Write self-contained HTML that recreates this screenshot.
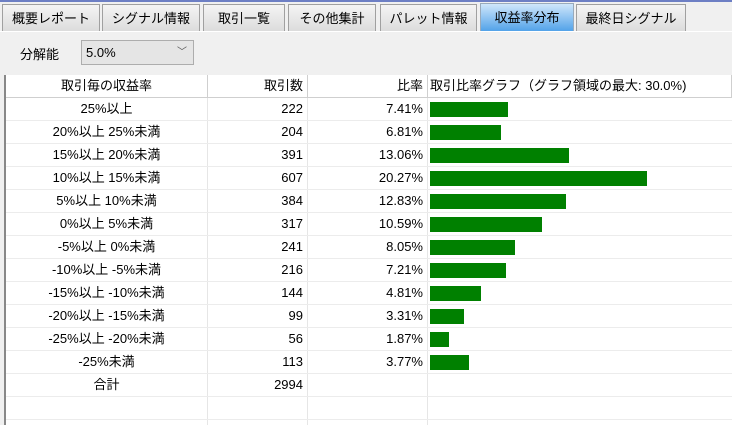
<!DOCTYPE html>
<html style="overflow:hidden;width:732px;height:425px"><head><meta charset="utf-8"><style>
*{margin:0;padding:0;box-sizing:border-box}
body{width:732px;height:425px;background:#f0f0f0;font-family:"Liberation Sans","Noto Sans CJK JP",sans-serif;font-size:13px;color:#000;position:relative;overflow:hidden}
.top{position:absolute;left:0;top:0;width:732px;height:2px;background:#6d7fc4}
.tab{position:absolute;top:4px;height:27px;border:1px solid #a0a0a0;border-bottom:none;background:linear-gradient(#f4f4f4,#dcdcdc);text-align:center;line-height:27px;font-size:13px}
.tab.act{background:linear-gradient(#cfe6fb,#4ea0e8);top:3px;height:29px;border-color:#9ab}
.line{position:absolute;left:0;top:31px;width:732px;height:1px;background:#fff}
.lbl{position:absolute;left:20px;top:44px}
.dd{position:absolute;left:81px;top:40px;width:113px;height:25px;border:1px solid #adadad;background:#e5e5e5;padding-left:4px;line-height:23px}
.dd span{position:absolute;right:6px;top:0;font-size:10px;color:#555}
.tbl{position:absolute;left:4px;top:75px;width:728px;height:350px;background:#fff;border-left:2px solid #888;overflow:hidden}
.row{position:absolute;left:0;height:23px;width:726px;border-bottom:1px solid #ececec}
.c{position:absolute;top:0;height:22px;line-height:22px;border-right:1px solid #e6e6e6}
.h .c{background:#fff;border-right:1px solid #cfcfcf}
.h{border-bottom:1px solid #cfcfcf}
.c1{left:0;width:202px;text-align:center}
.c2{left:202px;width:100px;text-align:right;padding-right:4px}
.c3{left:302px;width:120px;text-align:right;padding-right:4px}
.c4{left:422px;width:304px;border-right:none}
.bar{position:absolute;left:2px;top:4px;height:15px;background:#008000}
</style></head><body>
<div class="top"></div>
<div class="tab" style="left:2px;width:98px">概要レポート</div>
<div class="tab" style="left:102px;width:98px">シグナル情報</div>
<div class="tab" style="left:203px;width:82px">取引一覧</div>
<div class="tab" style="left:288px;width:88px">その他集計</div>
<div class="tab" style="left:380px;width:97px">パレット情報</div>
<div class="tab act" style="left:480px;width:94px">収益率分布</div>
<div class="tab" style="left:576px;width:110px">最終日シグナル</div>
<div class="line"></div>
<div class="lbl">分解能</div>
<div class="dd">5.0%<span>﹀</span></div>
<div class="tbl">
<div class="row h" style="top:0"><div class="c c1">取引毎の収益率</div><div class="c c2">取引数</div><div class="c c3">比率</div><div class="c c4" style="padding-left:2px">取引比率グラフ（グラフ領域の最大: 30.0%)</div></div>
<div class="row" style="top:23px"><div class="c c1">25%以上</div><div class="c c2">222</div><div class="c c3">7.41%</div><div class="c c4"><div class="bar" style="width:78px"></div></div></div>
<div class="row" style="top:46px"><div class="c c1">20%以上 25%未満</div><div class="c c2">204</div><div class="c c3">6.81%</div><div class="c c4"><div class="bar" style="width:71px"></div></div></div>
<div class="row" style="top:69px"><div class="c c1">15%以上 20%未満</div><div class="c c2">391</div><div class="c c3">13.06%</div><div class="c c4"><div class="bar" style="width:139px"></div></div></div>
<div class="row" style="top:92px"><div class="c c1">10%以上 15%未満</div><div class="c c2">607</div><div class="c c3">20.27%</div><div class="c c4"><div class="bar" style="width:217px"></div></div></div>
<div class="row" style="top:115px"><div class="c c1">5%以上 10%未満</div><div class="c c2">384</div><div class="c c3">12.83%</div><div class="c c4"><div class="bar" style="width:136px"></div></div></div>
<div class="row" style="top:138px"><div class="c c1">0%以上 5%未満</div><div class="c c2">317</div><div class="c c3">10.59%</div><div class="c c4"><div class="bar" style="width:112px"></div></div></div>
<div class="row" style="top:161px"><div class="c c1">-5%以上 0%未満</div><div class="c c2">241</div><div class="c c3">8.05%</div><div class="c c4"><div class="bar" style="width:85px"></div></div></div>
<div class="row" style="top:184px"><div class="c c1">-10%以上 -5%未満</div><div class="c c2">216</div><div class="c c3">7.21%</div><div class="c c4"><div class="bar" style="width:76px"></div></div></div>
<div class="row" style="top:207px"><div class="c c1">-15%以上 -10%未満</div><div class="c c2">144</div><div class="c c3">4.81%</div><div class="c c4"><div class="bar" style="width:51px"></div></div></div>
<div class="row" style="top:230px"><div class="c c1">-20%以上 -15%未満</div><div class="c c2">99</div><div class="c c3">3.31%</div><div class="c c4"><div class="bar" style="width:34px"></div></div></div>
<div class="row" style="top:253px"><div class="c c1">-25%以上 -20%未満</div><div class="c c2">56</div><div class="c c3">1.87%</div><div class="c c4"><div class="bar" style="width:19px"></div></div></div>
<div class="row" style="top:276px"><div class="c c1">-25%未満</div><div class="c c2">113</div><div class="c c3">3.77%</div><div class="c c4"><div class="bar" style="width:39px"></div></div></div>
<div class="row" style="top:299px"><div class="c c1">合計</div><div class="c c2">2994</div><div class="c c3"></div><div class="c c4"></div></div>
<div class="row" style="top:322px"><div class="c c1"></div><div class="c c2"></div><div class="c c3"></div><div class="c c4"></div></div>
<div class="row" style="top:345px"><div class="c c1"></div><div class="c c2"></div><div class="c c3"></div><div class="c c4"></div></div>
</div>
</body></html>
